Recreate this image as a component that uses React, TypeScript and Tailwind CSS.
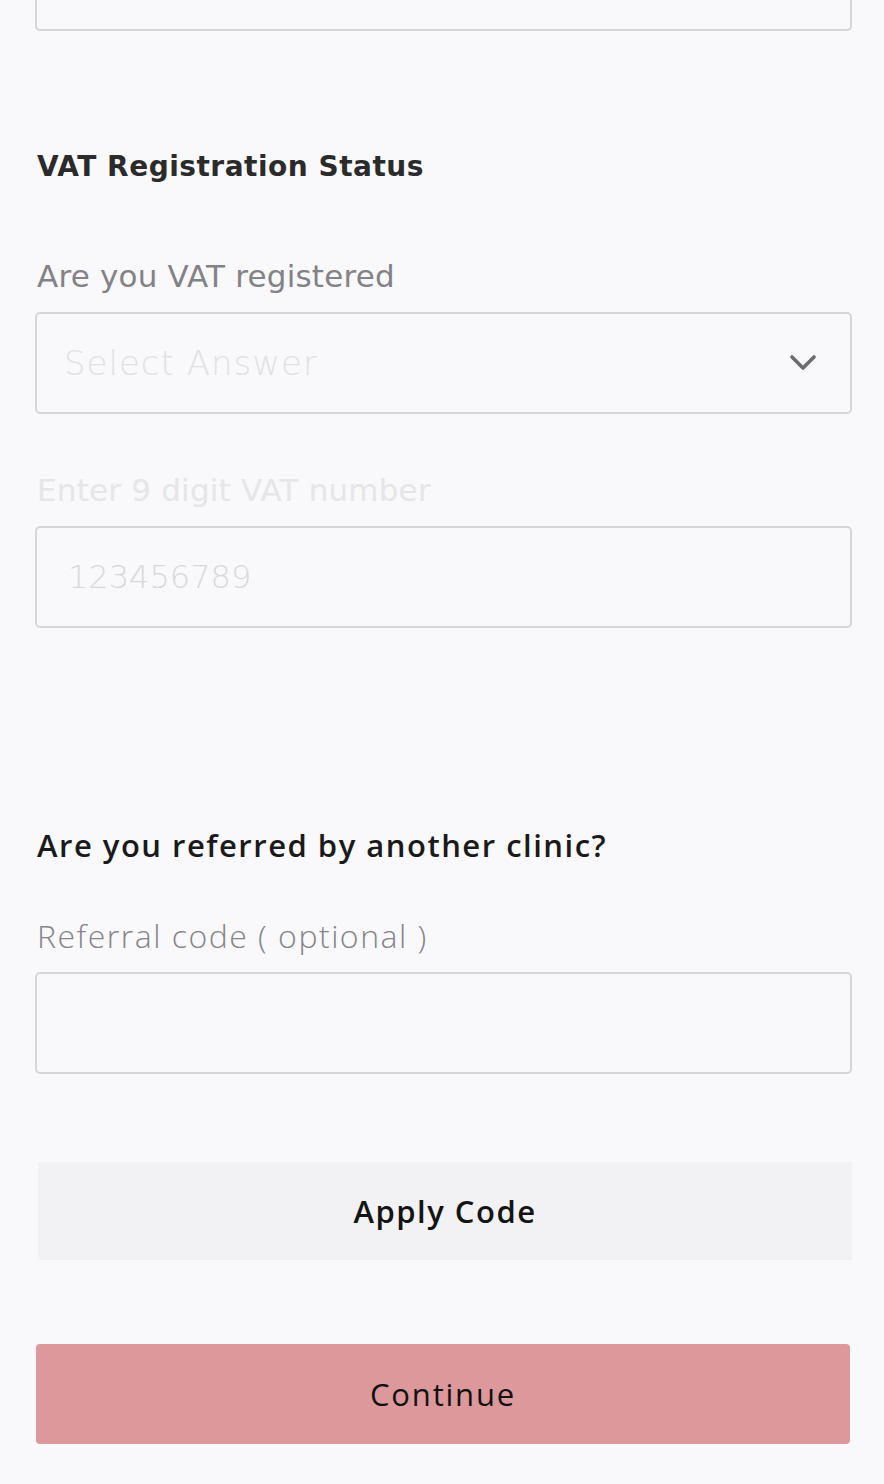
export default function App() {
  return (
    <main className="min-h-screen w-full bg-[#f9f8fa] pb-10 pl-[35px] pr-[32px] text-[#1c1c1c]">
      {/* tail of the previous field */}
      <div className="h-[31px] rounded-b-[5px] border-x-2 border-b-2 border-[#d6d5d8]" />

      {/* VAT */}
      <h2 className="mt-[116px] pl-[2px] font-['DejaVu_Sans',sans-serif] text-[28px] font-semibold leading-[40px] tracking-[0.5px] text-[#2b2b2b]">
        VAT Registration Status
      </h2>

      <label className="mt-[69px] block pl-[2px] font-['DejaVu_Sans',sans-serif] text-[31px] font-normal leading-[40px] tracking-[0.2px] text-[#838286]">
        Are you VAT registered
      </label>
      <div className="mt-[16px] flex h-[102px] items-center justify-between rounded-[5px] border-2 border-[#d6d5d8] pl-[27px] pr-[33px]">
        <span className="font-['DejaVu_Sans',sans-serif] text-[34px] font-extralight tracking-[1px] text-[#e2e1e4]">
          Select Answer
        </span>
        <svg width="28" height="18" viewBox="0 0 28 18" fill="none" className="text-[#6c6b6f]">
          <path d="M3 3 L14 14 L25 3" stroke="currentColor" strokeWidth="3.6" strokeLinecap="round" strokeLinejoin="round" />
        </svg>
      </div>

      <label className="mt-[56px] block pl-[2px] font-['DejaVu_Sans',sans-serif] text-[31px] font-normal leading-[40px] tracking-[0.2px] text-[#e6e5e8]">
        Enter 9 digit VAT number
      </label>
      <div className="mt-[16px] flex h-[102px] items-center rounded-[5px] border-2 border-[#d6d5d8] pl-[31px]">
        <span className="font-['DejaVu_Sans',sans-serif] text-[32px] font-extralight text-[#d9d8db]">123456789</span>
      </div>

      {/* Referral */}
      <h2 className="mt-[197px] pl-[2px] font-['Open_Sans',sans-serif] text-[31px] font-semibold leading-[40px] tracking-[1.5px] text-[#1a1a1a]">
        Are you referred by another clinic?
      </h2>
      <label className="mt-[51px] block pl-[2px] font-['Open_Sans',sans-serif] text-[32px] font-light leading-[40px] tracking-[1.5px] text-[#858488]">
        Referral code ( optional )
      </label>
      <div className="mt-[16px] h-[102px] rounded-[5px] border-2 border-[#d6d5d8]" />

      <button className="mt-[88px] ml-[3px] flex h-[98px] w-[814px] items-center justify-center bg-[#f2f1f3] font-['Open_Sans',sans-serif] text-[31px] font-semibold tracking-[1.5px] text-[#141414]">
        Apply Code
      </button>

      <button className="mt-[84px] ml-[1px] flex h-[100px] w-[814px] items-center justify-center rounded-[4px] bg-[#dc989b] font-['Open_Sans',sans-serif] text-[31px] font-medium tracking-[1.8px] text-[#111]">
        Continue
      </button>
    </main>
  );
}
